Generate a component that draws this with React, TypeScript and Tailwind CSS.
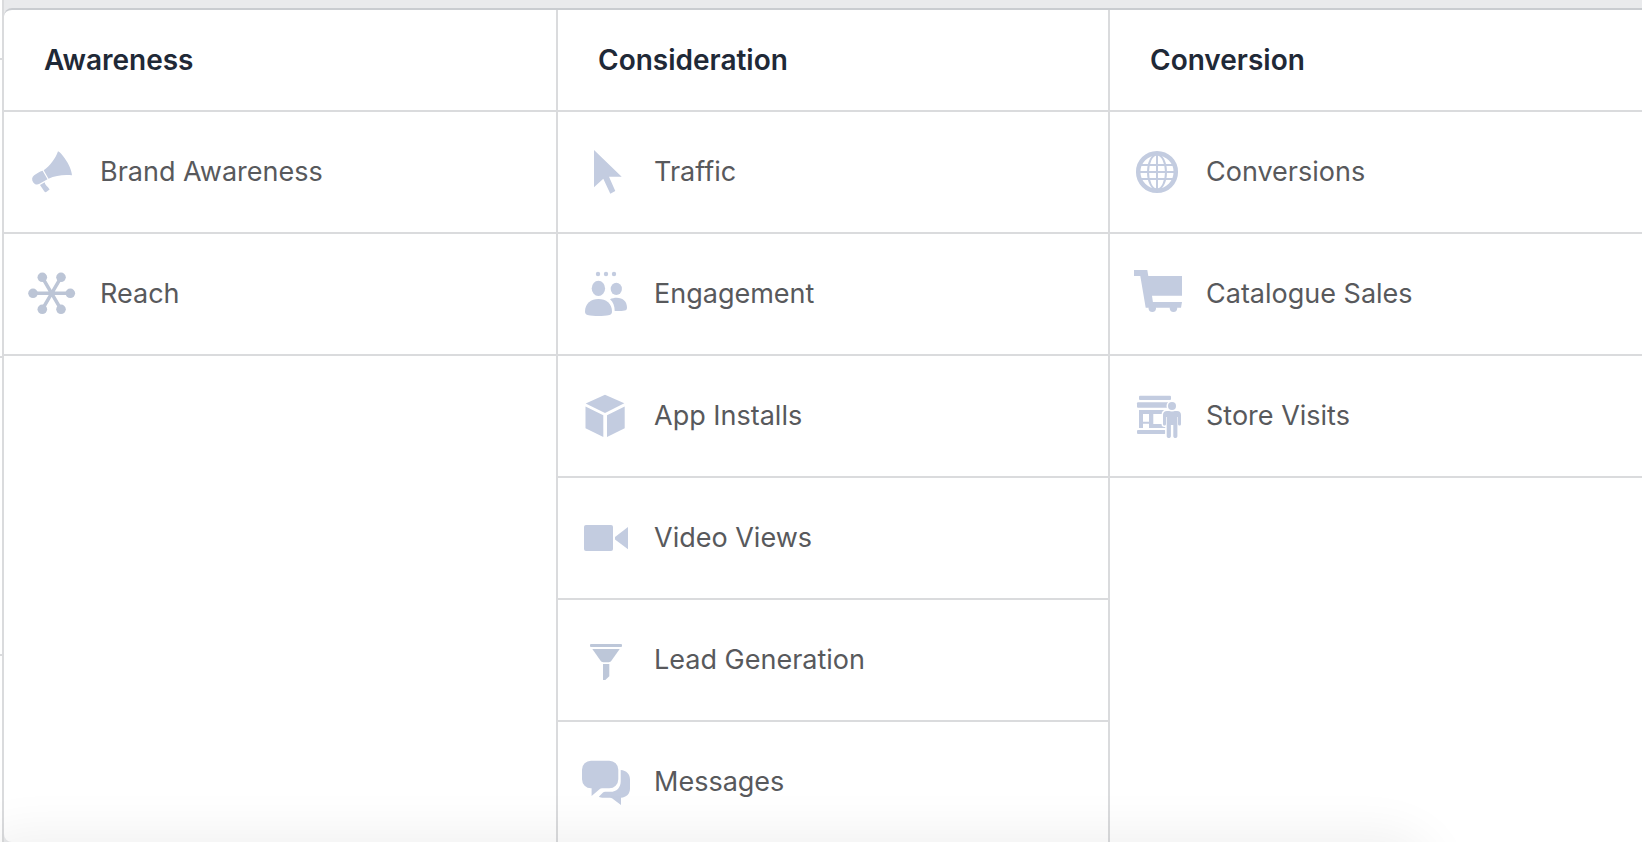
import type { ReactNode } from "react";

type Objective = { label: string; icon: ReactNode };
type Column = { title: string; objectives: Objective[] };

const megaphone = (
  <>
    <path d="M30 3.3c1.500.6 4.200 3.400 6.700 6.900 4 5.600 7 12.300 7.300 17.100-8-1-16.500.2-23.500 3.400l-4.800-8.400C22 18 27.500 10.500 30 3.300z" />
    <path d="M14.600 22.800l4.900 8.400-8 4.600c-2.400 1.200-4.900.6-6.200-1.400-1.900-2.800-1.500-5.500.9-7.200 2.500-1.700 5.200-3.400 8.400-4.400z" />
    <path d="M12 37l4.700-2.700c.3 2 1.300 3.300 3.300 5l1.600 2.200-3.700 2.700c-.7 0-1.300-.4-1.700-1z" />
  </>
);

const network = (
  <g className="fill-[#bcc5d6] stroke-[#bcc5d6]">
    <path d="M5 23.300h37.300M14.300 7.300L33 39.300M33 7.300L14.300 39.300" strokeWidth="3.500" />
    <g stroke="none">
      <circle cx="5" cy="23.300" r="4.800" />
      <circle cx="42.300" cy="23.300" r="4.800" />
      <circle cx="14.300" cy="7.300" r="4.800" />
      <circle cx="33" cy="7.300" r="4.800" />
      <circle cx="14.300" cy="39.300" r="4.800" />
      <circle cx="33" cy="39.300" r="4.800" />
    </g>
  </g>
);

const pointer = <path d="M12 2l27.700 26.700H27l6.300 14.300-5 2.700-7-15-9.300 8.600z" />;

const people = (
  <>
    <circle cx="16" cy="4" r="2.200" />
    <circle cx="24" cy="4" r="2.200" />
    <circle cx="32" cy="4" r="2.200" />
    <ellipse cx="16.400" cy="18.400" rx="6.700" ry="7.600" />
    <ellipse cx="34.300" cy="18.900" rx="5.600" ry="6.200" />
    <path d="M16.500 29C24 29 30 33.500 30 41.500c0 2-.8 3-2.500 3.500-6.500 1.300-15.500 1.300-22 0C3.800 44.500 3 43.500 3 41.500 3 33.500 9 29 16.500 29z" />
    <path d="M28 29.200c2-1 4.300-1.500 6.700-1.500C41 27.700 45 31.500 45 37.500c0 2-.8 2.800-2.300 3.100-3 .5-6.500.6-10 .4 0-5-1.500-9-4.700-11.800z" />
  </>
);

const box = (
  <>
    <path d="M23 2.700l19.300 8.600L23 21 3.700 11.500z" />
    <path d="M3.500 14.500l17.800 8.700V45L3.500 36.300z" />
    <path d="M42.700 14.500L25 23.200V45l17.700-8.700z" />
  </>
);

const camera = (
  <>
    <rect x="2" y="11" width="29" height="26" rx="2" />
    <path d="M46 13v22.300L33 25.500v-2.600z" />
  </>
);

const funnel = (
  <g className="fill-[#bdc7d9]">
    <rect x="8" y="8" width="32" height="3" rx="1" />
    <path d="M10.300 13h27.400l-8.300 11.800c-.8 1-1.500 1.400-2.600 1.400h-5.600c-1.100 0-1.800-.4-2.600-1.400z" />
    <path d="M21 28h6.300v12.300L23.300 44H21z" />
  </g>
);

const bubbles = (
  <>
    <path d="M9 2.700h18.300a9 9 0 0 1 9 9v9.600a9 9 0 0 1-9 9H20c-1 0-1.700.3-2.500 1L9.600 38.100V30.300H9a9 9 0 0 1-9-9v-9.600a9 9 0 0 1 9-9z" />
    <path d="M38.700 12c5.800.6 9.300 4.200 9.300 9.500v9c0 5.300-3.500 8.800-9 9.200V47l-9-6.700c-.6-.4-1.200-.6-2-.6h-6.500c-1.800 0-3.300-.2-4.700-1l4.200-4.100c.7-.6 1.200-.8 2.100-.8h5.200c6.500 0 10.400-4.300 10.400-10.600z" />
  </>
);

const globe = (
  <g className="fill-none stroke-[#c3cce0]">
    <circle cx="23" cy="24" r="18.800" strokeWidth="4.500" />
    <g strokeWidth="2">
      <ellipse cx="23" cy="24" rx="9" ry="17.500" />
      <path d="M23 6v36M6 17h34M5 24h36M6 31h34" />
    </g>
  </g>
);

const cart = (
  <>
    <path d="M0 0h13.300l1 6H48v19.700H18l.9 6.300H48l-1 5.700H11.700L6.300 6H0z" />
    <circle cx="18.300" cy="38.300" r="3.700" />
    <circle cx="39.500" cy="38.300" r="3.700" />
  </>
);

const store = (
  <>
    <rect x="5" y="3.700" width="32" height="4.300" rx="1" />
    <rect x="3" y="10.300" width="33" height="5.400" rx="1" />
    <path fillRule="evenodd" d="M5 18h27v18H5zM9 22v7.700h6V22zM9 31.700V36h6v-4.300zM19.300 22v10H28V22z" />
    <rect x="3" y="38" width="28.500" height="4" rx="1" />
    <g className="stroke-white" strokeWidth="3" paintOrder="stroke">
      <path d="M33 19h10c2.500 0 4 1.500 4 4v9c0 2-2.800 2-3 0v-7h-.6v19c0 2.700-4.100 2.700-4.100 0V33h-2.400v11c0 2.700-4.200 2.700-4.200 0V25H32v7c-.2 2-3 2-3 0v-9c0-2.500 1.500-4 4-4z" />
      <circle cx="38" cy="14" r="4" />
    </g>
  </>
);

const columns: Column[] = [
  {
    title: "Awareness",
    objectives: [
      { label: "Brand Awareness", icon: megaphone },
      { label: "Reach", icon: network },
    ],
  },
  {
    title: "Consideration",
    objectives: [
      { label: "Traffic", icon: pointer },
      { label: "Engagement", icon: people },
      { label: "App Installs", icon: box },
      { label: "Video Views", icon: camera },
      { label: "Lead Generation", icon: funnel },
      { label: "Messages", icon: bubbles },
    ],
  },
  {
    title: "Conversion",
    objectives: [
      { label: "Conversions", icon: globe },
      { label: "Catalogue Sales", icon: cart },
      { label: "Store Visits", icon: store },
    ],
  },
];

function ObjectiveRow({ label, icon }: Objective) {
  return (
    <li className="border-b-2 border-[#dadbdd]">
      <button type="button" className="flex h-[120px] w-full items-center gap-6 pl-6 text-left text-[27px] text-[#58595c]">
        <svg viewBox="0 0 48 48" className="h-12 w-12 shrink-0 fill-[#c3cce0]" aria-hidden="true">
          {icon}
        </svg>
        {label}
      </button>
    </li>
  );
}

function App() {
  return (
    <div className="relative flex h-screen overflow-hidden bg-[#e9eaec] font-['Inter','Liberation_Sans',sans-serif]">
      {/* edge of the panel behind, with its row ticks */}
      <div className="flex w-1 shrink-0 flex-col border-r-2 border-[#dadbdd] bg-white">
        <div className="h-[60px] shrink-0 border-b-2 border-[#dadbdd]" />
        <div className="h-[298px] shrink-0 border-b-2 border-[#dadbdd]" />
        <div className="h-[298px] shrink-0 border-b-2 border-[#dadbdd]" />
      </div>

      <main className="mt-2 grid flex-1 grid-cols-[554fr_552fr_532fr] overflow-hidden rounded-l-lg border-t-2 border-[#c9ccd0] bg-white">
        {columns.map((column) => (
          <section key={column.title} className="border-r-2 border-[#dadbdd] last:border-r-0">
            <h2 className="flex h-[102px] items-center border-b-2 border-[#dadbdd] pl-10 text-[28px] font-semibold text-[#1f2937]">
              {column.title}
            </h2>
            <ul>
              {column.objectives.map((objective) => (
                <ObjectiveRow key={objective.label} {...objective} />
              ))}
            </ul>
          </section>
        ))}
      </main>

      {/* soft shadow rising from the bottom edge */}
      <div className="pointer-events-none absolute inset-x-0 bottom-0 h-20 overflow-hidden">
        <div className="absolute top-full -left-5 h-20 w-[88%] rounded-[40px] shadow-[0_0_50px_10px_rgba(0,0,0,0.06)]" />
      </div>
    </div>
  );
}

export default App;
